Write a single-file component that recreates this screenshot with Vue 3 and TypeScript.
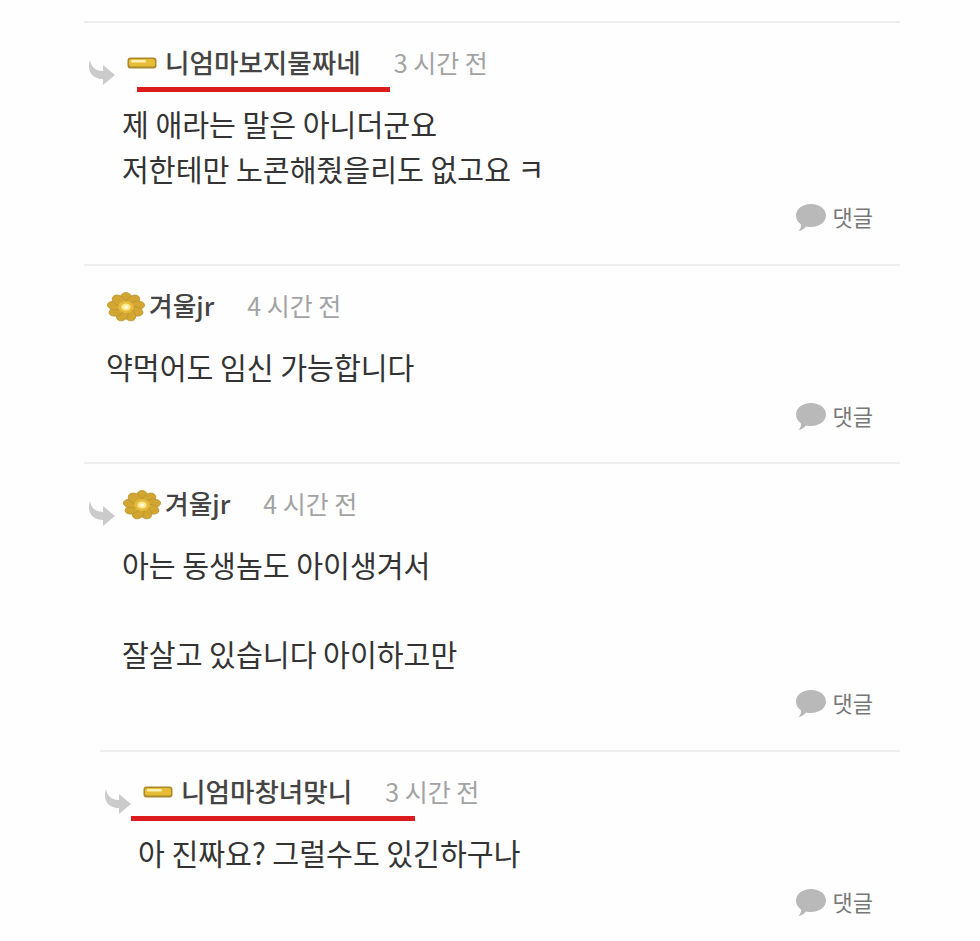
<script setup lang="ts">
interface Comment {
  id: number
  name: string
  time: string
  rank: 'bar' | 'flower'
  depth: number
  reply: boolean
  lines: string[]
  mark?: { left: number; width: number }
}

const comments: Comment[] = [
  {
    id: 1,
    name: '니엄마보지물짜네',
    time: '3 시간 전',
    rank: 'bar',
    depth: 0,
    reply: true,
    lines: ['제 애라는 말은 아니더군요', '저한테만 노콘해줬을리도 없고요 ㅋ'],
    mark: { left: 15, width: 253 }
  },
  {
    id: 2,
    name: '겨울jr',
    time: '4 시간 전',
    rank: 'flower',
    depth: 0,
    reply: false,
    lines: ['약먹어도 임신 가능합니다']
  },
  {
    id: 3,
    name: '겨울jr',
    time: '4 시간 전',
    rank: 'flower',
    depth: 0,
    reply: true,
    lines: ['아는 동생놈도 아이생겨서', '', '잘살고 있습니다 아이하고만']
  },
  {
    id: 4,
    name: '니엄마창녀맞니',
    time: '3 시간 전',
    rank: 'bar',
    depth: 1,
    reply: true,
    lines: ['아 진짜요? 그럴수도 있긴하구나'],
    mark: { left: -7, width: 284 }
  }
]

const petals = [0, 40, 80, 120, 160, 200, 240, 280, 320]
</script>

<template>
  <ul class="comment-list">
    <li
      v-for="comment in comments"
      :key="comment.id"
      class="comment"
      :class="{ nested: comment.depth > 0, reply: comment.reply }"
    >
      <svg v-if="comment.reply" class="reply-arrow" viewBox="0 0 28 26" aria-hidden="true">
        <path d="M2 0 C3 6 6 10.5 15 11 L15 5 L27 15 L15 25 L15 19 C6 19 -2 13 2 0 Z" />
      </svg>

      <div class="comment-head">
        <svg v-if="comment.rank === 'bar'" class="rank rank-bar" viewBox="0 0 30 12" aria-hidden="true">
          <rect x="0.5" y="0.5" width="29" height="11" rx="3" fill="#a98a2c" />
          <rect x="2" y="2" width="26" height="7.5" rx="2" fill="#e6bd35" />
          <rect x="4" y="3" width="15" height="2.5" rx="1" fill="#fbf0b4" />
        </svg>
        <svg v-else class="rank rank-flower" viewBox="0 0 38 30" aria-hidden="true">
          <g transform="translate(19 15) scale(1.3 1)">
            <ellipse
              v-for="angle in petals"
              :key="angle"
              cx="0"
              cy="-8.5"
              rx="4.4"
              ry="6"
              fill="#d3a632"
              stroke="#b8952f"
              stroke-width="0.7"
              :transform="`rotate(${angle})`"
            />
            <circle r="6" fill="#e5bb3d" />
            <circle r="3.6" fill="#fbe98a" />
            <circle r="1.6" fill="#fffbe0" />
          </g>
        </svg>
        <span class="name" :class="comment.rank">{{ comment.name }}</span>
        <span class="time">{{ comment.time }}</span>
        <span
          v-if="comment.mark"
          class="red-mark"
          :style="{ left: comment.mark.left + 'px', width: comment.mark.width + 'px' }"
        ></span>
      </div>

      <div class="comment-body">
        <p v-for="(line, i) in comment.lines" :key="i">{{ line || '\u00a0' }}</p>
      </div>

      <div class="comment-foot">
        <svg class="bubble" viewBox="0 0 30 27" aria-hidden="true">
          <path d="M15 0 C23.5 0 30 5 30 11.5 C30 18 23.5 23 15 23 C13 23 11.5 22.8 10 22.4 C8 24.8 5.5 26.4 2.5 27 C4.5 24.8 5.2 22.6 5 20.4 C1.8 18.2 0 15 0 11.5 C0 5 6.5 0 15 0 Z" />
        </svg>
        <span class="reply-label">댓글</span>
      </div>
    </li>
  </ul>
</template>

<style scoped>
.comment-list {
  list-style: none;
  margin: 0;
  padding: 21px 80px 0 84px;
  font-family: "Noto Sans CJK KR", "Noto Sans", sans-serif;
}

.comment {
  position: relative;
  box-sizing: border-box;
  border-top: 2px solid #eeeeee;
  padding: 0 27px 0 22px;
  height: 198px;
}

.comment:first-child {
  height: 243px;
}

.comment:nth-child(3) {
  height: 288px;
}

.comment.nested {
  margin-left: 16px;
}

.comment.reply .comment-head,
.comment.reply .comment-body {
  margin-left: 16px;
}

.reply-arrow {
  position: absolute;
  left: 4px;
  top: 37px;
  width: 28px;
  height: 26px;
  fill: #cbcbcb;
}

.comment-head {
  position: relative;
  display: flex;
  align-items: center;
  height: 40px;
  margin-top: 19px;
}

.rank {
  flex: none;
}

.rank-bar {
  width: 30px;
  height: 12px;
  margin: 2px 8px 0 5px;
}

.rank-flower {
  width: 38px;
  height: 30px;
  margin: 3px 4px 0 1px;
}

.name {
  font-size: 25.7px;
  font-weight: 500;
  line-height: 40px;
  color: #444444;
  white-space: nowrap;
}

.name.bar {
  font-size: 26.6px;
}

.time {
  margin-left: 33px;
  font-size: 25px;
  line-height: 40px;
  color: #a3a3a3;
  white-space: nowrap;
}

.red-mark {
  position: absolute;
  top: 45px;
  height: 5px;
  background: #dc1c1c;
}

.comment-body {
  margin-top: 19px;
  font-size: 29.2px;
  line-height: 44.5px;
  color: #333333;
}

.comment-body p {
  margin: 0;
  white-space: nowrap;
}

.comment-foot {
  display: flex;
  align-items: center;
  justify-content: flex-end;
  gap: 7px;
  height: 40px;
  margin-top: 6px;
}

.bubble {
  width: 30px;
  height: 27px;
  margin-top: 3px;
  fill: #b9b9b9;
}

.reply-label {
  font-size: 22px;
  line-height: 40px;
  color: #777777;
}
</style>

<style>
html,
body {
  background: #fefefe;
}
</style>
